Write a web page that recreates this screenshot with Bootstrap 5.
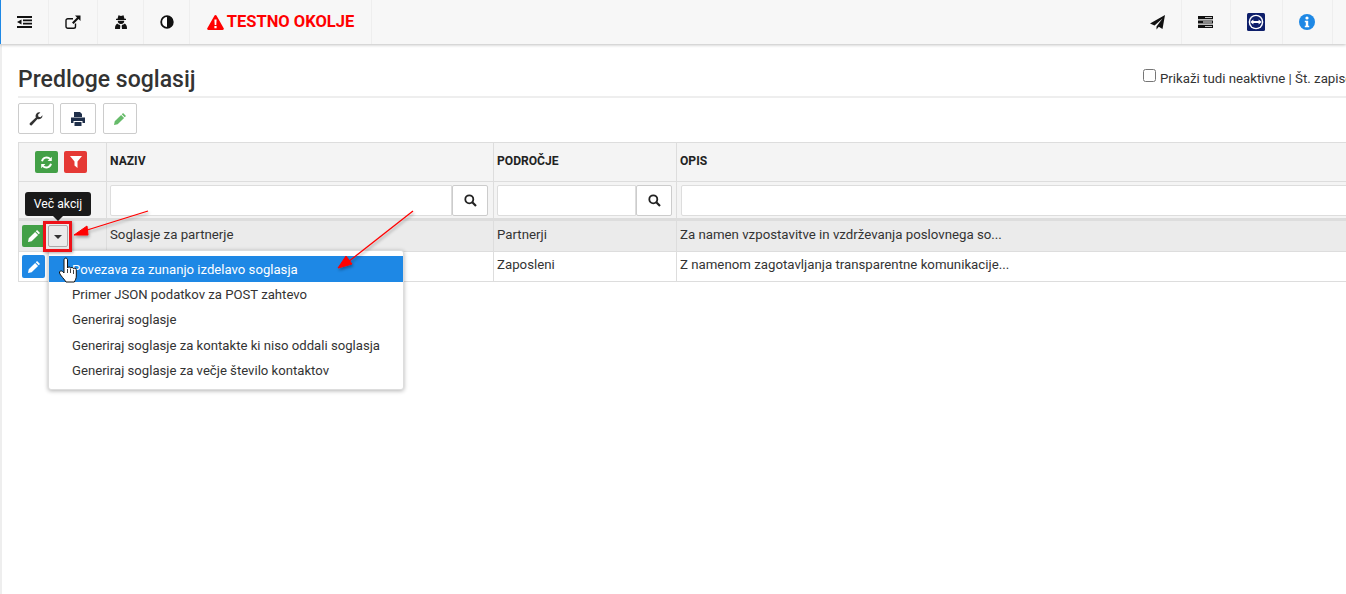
<!DOCTYPE html>
<html lang="sl">
<head>
    <meta charset="UTF-8">
    <meta name="viewport" content="width=device-width, initial-scale=1.0">
    <title>Predloge soglasij</title>
    <link href="https://cdn.jsdelivr.net/npm/bootstrap@5.3.0/dist/css/bootstrap.min.css" rel="stylesheet">
    <style>
        html, body { height: 100%; overflow: hidden; }
        body { font-family: Roboto, sans-serif; font-size: 13.25px; color: #333; background: #fff; }
        .page-shell { position: relative; width: 1346px; height: 594px; overflow: hidden; padding-left: 2px; background: linear-gradient(#eee, #eee) left top / 2px 100% no-repeat; }
        .top-bar { height: 44px; margin-left: -2px; background: #f7f7f7; border-left: 1px solid #1e88e5; box-shadow: 0 1px 3px rgba(0,0,0,.25); }
        .top-cell { height: 44px; border-right: 1px solid #eee; }
        .top-cell svg { display: block; }
        .w-a { width: 48px; } .w-b { width: 49px; } .w-c { width: 46px; } .w-d { width: 182px; }
        .w-e { width: 49px; } .w-f { width: 52px; } .w-g { width: 50px; } .w-h { width: 13px; border-right: 0; }
        .pad-icon { padding-right: 2px; }
        .test-env { color: #f00; font-size: 16.5px; font-weight: 700; line-height: 1; }
        .page-head { margin: 0 0 0 16px; height: 54px; border-bottom: 2px solid #eee; }
        .page-title { font-size: 23px; font-weight: 500; line-height: 1; color: #333; margin: 24px 0 0; }
        .head-opts { font-size: 13.25px; white-space: nowrap; margin-top: 25px; width: 203px; color: #333; overflow: hidden; }
        .head-opts input { width: 13px; height: 13px; margin: 0 4px 0 0; vertical-align: 1px; }
        .tool-row { margin: 5px 0 8px 16px; gap: 6px; }
        .tool-btn { width: 36px; height: 31px; padding: 0; border: 1px solid #ccc; border-radius: 2px; background: #fff; }
        .tool-btn.narrow { width: 34px; margin-left: 1px; }
        .data-wrap { margin-left: 16px; width: 1500px; }
        .data-table { table-layout: fixed; width: 1500px; margin: 0; border-collapse: collapse; font-size: 13.25px; color: #333; }
        .data-table td, .data-table th { border: 1px solid #ddd; padding: 0 3px; vertical-align: middle; box-shadow: none; }
        .data-table th { background: #f4f4f4; font-weight: 700; font-size: 12.1px; color: #222; height: 39px; text-transform: uppercase; padding-bottom: 2px; }
        .data-table th.btn-cell { padding-bottom: 0; }
        .filter-row td { background: #f4f4f4; height: 38px; border-bottom: 3px solid #ddd; }
        .row-one td { background: #ebebeb; height: 32px; padding-bottom: 2px; }
        .row-two td { background: #fff; height: 30px; padding-bottom: 4px; }
        .data-table td.btn-cell { padding-bottom: 0; }
        .head-btns { padding-left: 13px; gap: 6px; }
        .mini-btn { width: 23px; height: 22px; padding: 0; border: 0; border-radius: 2px; }
        .bg-grn { background: #43a047; } .bg-rd { background: #e53935; } .bg-blu { background: #1e88e5; height: 23px; }
        .filter-box { height: 31px; gap: 0; }
        .filter-box input { flex: 1; min-width: 0; height: 31px; border: 1px solid #ddd; border-radius: 2px 0 0 2px; background: #fff; }
        .filter-box button { width: 36px; height: 31px; padding: 0; border: 1px solid #ccc; border-radius: 2px; background: #fff; }
        .inset-r2 { margin-right: 2px; } .inset-r1 { margin-right: 1px; } .inset-l1 { margin-left: 1px; }
        .caret-btn { width: 20px; height: 22px; padding: 0; border: 1px solid #aaa; border-radius: 2px; background: #ebebeb; margin-left: 3px; }
        .caret-btn span { display: block; margin: 2px auto 0; width: 0; height: 0; border: 4px solid transparent; border-top-color: #333; border-bottom: 0; }
        .more-tip { position: absolute; left: 25px; top: 192px; width: 66px; height: 24px; background: #1a1a1a; color: #fff; border-radius: 3px; font-size: 12.2px; line-height: 24px; text-align: center; z-index: 5; }
        .more-tip::after { content: ""; position: absolute; left: 28px; bottom: -5px; border: 5px solid transparent; border-top-color: #1a1a1a; border-bottom: 0; }
        .mark-box { position: absolute; left: 43px; top: 221px; width: 29px; height: 31px; border: 3px solid #ee1118; box-shadow: 1px 1px 3px rgba(0,0,0,.35); z-index: 6; }
        .action-menu { position: absolute; left: 48px; top: 250px; width: 356px; height: 140px; margin: 0; padding: 5px 0 0; list-style: none; background: #fff; border: 1px solid #ddd; border-radius: 3px; box-shadow: 0 1px 4px rgba(0,0,0,.3); z-index: 4; }
        .action-menu li { height: 25.3px; line-height: 25px; padding-left: 23px; font-size: 13.15px; color: #333; white-space: nowrap; }
        .action-menu li.is-active { height: 26px; line-height: 28px; background: #1e88e5; color: #fff; }
        .overlay-art { position: absolute; left: 0; top: 0; z-index: 7; pointer-events: none; }
    </style>
</head>
<body>
    <div class="page-shell">
        <!-- Top bar -->
        <div class="top-bar d-flex justify-content-between">
            <div class="d-flex">
                <div class="top-cell w-a d-flex align-items-center justify-content-center">
                    <svg width="16" height="14" viewBox="0 0 16 14"><path d="M0 1h15v2H0zM6 4.500h9v1.800H6zM6 7.700h9v1.800H6zM0 11h15v2H0zM4.500 4.500v5L0 7z" fill="#111"/></svg>
                </div>
                <div class="top-cell w-b d-flex align-items-center justify-content-center">
                    <svg width="16" height="15" viewBox="0 0 16 15"><path d="M10.500 8.500v3A1.800 1.800 0 0 1 8.700 13.300H2.800A1.800 1.800 0 0 1 1 11.500V5.600A1.800 1.800 0 0 1 2.800 3.800H8" fill="none" stroke="#111" stroke-width="1.400"/><path d="M10 .5h5.500V6l-2-2-5 5-1.500-1.500 5-5z" fill="#111"/></svg>
                </div>
                <div class="top-cell w-c d-flex align-items-center justify-content-center">
                    <svg width="12" height="14" viewBox="0 0 12 14"><path d="M3.500.3 6 1 8.500.3 9.500 3.700H11V5H1V3.700h1.500zM2.800 5.800h6.400c.2 1.800-1 3.200-3.200 3.200S2.600 7.600 2.800 5.800zM2.300 8.600c.8 1 2.200 1.400 2.700 1.400l.3 1-.3 3H.5c-.5 0-.5-.5-.5-1 0-2 1-3.800 2.300-4.400zM9.700 8.600C11 9.200 12 11 12 13c0 .5 0 1-.5 1H7l-.3-3 .3-1c.5 0 1.900-.4 2.700-1.400z" fill="#111"/></svg>
                </div>
                <div class="top-cell w-c d-flex align-items-center justify-content-center">
                    <svg width="14" height="14" viewBox="0 0 14 14"><circle cx="7" cy="7" r="5.800" fill="#fff" stroke="#111" stroke-width="1.800"/><path d="M7 1.200a5.800 5.800 0 0 1 0 11.600z" fill="#111"/></svg>
                </div>
                <div class="top-cell w-d d-flex align-items-center justify-content-center" style="gap:3px">
                    <svg width="17" height="15" viewBox="0 0 17 15"><path d="M8.500 0c.5 0 .9.300 1.100.7l7.100 12.500c.5.800-.1 1.800-1.100 1.800H1.400c-1 0-1.600-1-1.100-1.800L7.400.7C7.600.300 8 0 8.500 0z" fill="#f00"/><path d="M7.400 4.500h2.200l-.3 5.500H7.700zM7.400 11h2.200v2.200H7.400z" fill="#fff"/></svg>
                    <span class="test-env">TESTNO OKOLJE</span>
                </div>
            </div>
            <div class="d-flex">
                <div class="top-cell w-e d-flex align-items-center justify-content-center">
                    <svg width="15" height="15" viewBox="0 0 15 15"><path d="M15 0 12.500 14 8.800 11.800 6.500 14.500V11.500L12.500 3.500 4.500 10.500 0 8.500z" fill="#111"/></svg>
                </div>
                <div class="top-cell w-e pad-icon d-flex align-items-center justify-content-center">
                    <svg width="15" height="12" viewBox="0 0 15 12"><path d="M0 0h15v3.200H0zM0 4.400h15v3.200H0zM0 8.800h15V12H0z" fill="#111"/><path d="M7 1.200h7v.8H7zM5 5.600h9v.8H5zM7 10h7v.8H7z" fill="#fff"/></svg>
                </div>
                <div class="top-cell w-f pad-icon d-flex align-items-center justify-content-center">
                    <svg width="18" height="18" viewBox="0 0 18 18"><rect width="18" height="18" rx="1.500" fill="#0e1f6b"/><circle cx="9" cy="9" r="7.300" fill="#fff"/><circle cx="9" cy="9" r="5.900" fill="#0e1f6b"/><path d="M3.200 9 6.400 6.400v1.700h5.200V6.400L14.800 9l-3.200 2.600V9.900H6.400v1.700z" fill="#fff"/></svg>
                </div>
                <div class="top-cell w-g pad-icon d-flex align-items-center justify-content-center">
                    <svg width="16" height="16" viewBox="0 0 16 16"><circle cx="8" cy="8" r="8" fill="#1e88e5"/><circle cx="8" cy="4" r="1.600" fill="#fff"/><path d="M5.800 6.800h3.400v5h1v1.500H5.800v-1.500h1V8.300h-1z" fill="#fff"/></svg>
                </div>
                <div class="top-cell w-h"></div>
            </div>
        </div>

        <!-- Page heading -->
        <div class="page-head d-flex justify-content-between">
            <h1 class="page-title">Predloge soglasij</h1>
            <div class="head-opts"><input type="checkbox"><span>Prikaži tudi neaktivne | Št. zapisov</span></div>
        </div>

        <!-- Toolbar -->
        <div class="tool-row d-flex">
            <button type="button" class="tool-btn">
                <svg width="14" height="14" viewBox="0 0 14 14"><path d="M13.500 3.200a3.700 3.700 0 0 1-5 3.700L3 12.900a1.300 1.300 0 0 1-2-1.800L6.900 5.500a3.700 3.700 0 0 1 4.500-5L9 2.800l.5 2 2 .5z" fill="#333"/></svg>
            </button>
            <button type="button" class="tool-btn">
                <svg width="14" height="14" viewBox="0 0 14 14"><path d="M3 0h6l2 2v3H3zM0 5.500h14V11h-2.500V9h-9v2H0zM3.500 10h7v4h-7z" fill="#1f2f4a"/></svg>
            </button>
            <button type="button" class="tool-btn narrow">
                <svg width="12" height="12" viewBox="0 0 13 13"><path d="M9.800 0 13 3.200 11.600 4.600 8.400 1.400zM7.700 2.100 10.900 5.300 4 12.200 0 13l.8-4z" fill="#66bb6a"/></svg>
            </button>
        </div>

        <!-- Table -->
        <div class="data-wrap">
            <table class="table data-table">
                <colgroup><col style="width:88px"><col style="width:387px"><col style="width:183px"><col></colgroup>
                <thead>
                    <tr>
                        <th class="btn-cell">
                            <div class="d-flex head-btns">
                                <button type="button" class="mini-btn bg-grn d-flex align-items-center justify-content-center">
                                    <svg width="13" height="13" viewBox="0 0 13 13"><path d="M2 5.200A4.700 4.700 0 0 1 10.200 3.200M11 7.800A4.700 4.700 0 0 1 2.800 9.800" fill="none" stroke="#fff" stroke-width="1.900"/><path d="M11.800 .8V5H7.600zM1.200 12.200V8h4.200z" fill="#fff"/></svg>
                                </button>
                                <button type="button" class="mini-btn bg-rd d-flex align-items-center justify-content-center">
                                    <svg width="12" height="12" viewBox="0 0 12 12"><path d="M0 0h12L7.500 5.500V12L4.500 9.500v-4z" fill="#fff"/></svg>
                                </button>
                            </div>
                        </th>
                        <th>Naziv</th>
                        <th>Področje</th>
                        <th>Opis</th>
                    </tr>
                </thead>
                <tbody>
                    <tr class="filter-row">
                        <td></td>
                        <td><div class="filter-box d-flex inset-r2"><input type="text"><button type="button" class="d-flex align-items-center justify-content-center"><svg width="13" height="13" viewBox="0 0 13 13"><circle cx="5.300" cy="5.300" r="4" fill="none" stroke="#222" stroke-width="1.800"/><path d="M8.300 8.300 12 12" stroke="#222" stroke-width="2.200"/></svg></button></div></td>
                        <td><div class="filter-box d-flex inset-r1"><input type="text"><button type="button" class="d-flex align-items-center justify-content-center"><svg width="13" height="13" viewBox="0 0 13 13"><circle cx="5.300" cy="5.300" r="4" fill="none" stroke="#222" stroke-width="1.800"/><path d="M8.300 8.300 12 12" stroke="#222" stroke-width="2.200"/></svg></button></div></td>
                        <td><div class="filter-box d-flex inset-l1"><input type="text"></div></td>
                    </tr>
                    <tr class="row-one">
                        <td class="btn-cell">
                            <div class="d-flex">
                                <button type="button" class="mini-btn bg-grn d-flex align-items-center justify-content-center"><svg width="12" height="12" viewBox="0 0 13 13"><path d="M9.800 0 13 3.200 11.600 4.600 8.400 1.400zM7.700 2.100 10.900 5.300 4 12.200 0 13l.8-4z" fill="#fff"/></svg></button>
                                <button type="button" class="caret-btn"><span></span></button>
                            </div>
                        </td>
                        <td>Soglasje za partnerje</td>
                        <td>Partnerji</td>
                        <td>Za namen vzpostavitve in vzdrževanja poslovnega so...</td>
                    </tr>
                    <tr class="row-two">
                        <td class="btn-cell">
                            <button type="button" class="mini-btn bg-blu d-flex align-items-center justify-content-center"><svg width="12" height="12" viewBox="0 0 13 13"><path d="M9.800 0 13 3.200 11.600 4.600 8.400 1.400zM7.700 2.100 10.900 5.300 4 12.200 0 13l.8-4z" fill="#fff"/></svg></button>
                        </td>
                        <td></td>
                        <td>Zaposleni</td>
                        <td>Z namenom zagotavljanja transparentne komunikacije...</td>
                    </tr>
                </tbody>
            </table>
        </div>

        <!-- Overlays on top of the table -->
        <div class="more-tip">Več akcij</div>
        <div class="mark-box"></div>
        <ul class="action-menu">
            <li class="is-active">Povezava za zunanjo izdelavo soglasja</li>
            <li>Primer JSON podatkov za POST zahtevo</li>
            <li>Generiraj soglasje</li>
            <li>Generiraj soglasje za kontakte ki niso oddali soglasja</li>
            <li>Generiraj soglasje za večje število kontaktov</li>
        </ul>
        <svg class="overlay-art" width="1346" height="594" viewBox="0 0 1346 594">
            <defs><filter id="arrowShade" x="-20%" y="-20%" width="140%" height="140%"><feDropShadow dx="1" dy="2" stdDeviation="1.500" flood-color="#000" flood-opacity=".35"/></filter></defs>
            <g filter="url(#arrowShade)" fill="#f00" stroke="#f00">
                <path d="M148 211 84 231" stroke-width="1.300"/>
                <path d="M74 235 87 226 88 235z" stroke-width="1"/>
                <path d="M413 211 348 262" stroke-width="1.300"/>
                <path d="M338 268 346 256 352 264z" stroke-width="1"/>
            </g>
            <path d="M64 260c0-2.500 3.500-2.500 3.500 0v8c.5-1.500 3-1.500 3 .3.500-1.200 3-1.200 3 .5.600-1 2.800-.8 2.800 1v6.200c0 2.500-1 4-2 6H66c-1-2-6-7-6.500-9-.5-1.800 1.500-2.800 3-1.600l1.500 1.600z" fill="#fff" stroke="#111" stroke-width="1"/>
            <path d="M67.500 269v4M70.500 269v4M73.500 270v4" stroke="#111" stroke-width=".8" fill="none"/>
        </svg>
    </div>

    <script src="https://cdn.jsdelivr.net/npm/bootstrap@5.3.0/dist/js/bootstrap.bundle.min.js"></script>
</body>
</html>
